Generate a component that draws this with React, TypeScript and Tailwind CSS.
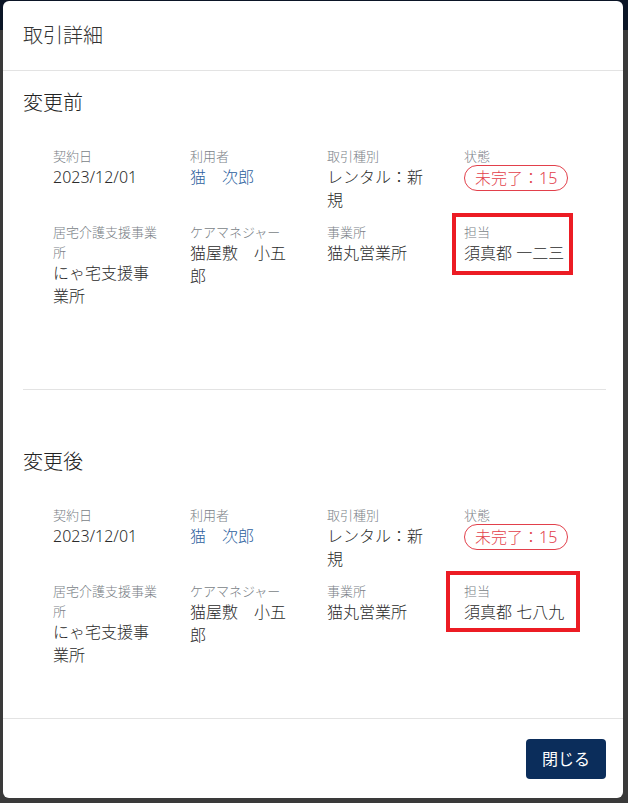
import React from "react";

type Field = {
  label: string;
  value: string;
  kind?: "link" | "badge";
  mark?: { left: number; top: number; width: number; height: number };
};

const FONT = { fontFamily: '"Noto Sans", "Noto Sans CJK JP", sans-serif' };

function Cell({ field }: { field: Field }) {
  return (
    <div className="relative pr-[28px]">
      {field.mark && (
        <div
          className="absolute border-[4px] border-[#ec1c24] pointer-events-none"
          style={{
            left: field.mark.left,
            top: field.mark.top,
            width: field.mark.width,
            height: field.mark.height,
          }}
        />
      )}
      <div className="text-[13px] leading-[20px] font-light text-[#7a7f87]">{field.label}</div>
      {field.kind === "badge" ? (
        <div className="mt-[-1px] inline-flex h-[26px] items-center rounded-full border border-[#e2404b] px-[10px] text-[16px] font-light text-[#e2404b]">
          {field.value}
        </div>
      ) : (
        <div
          className={
            "text-[16px] leading-[23px] font-light " +
            (field.kind === "link" ? "text-[#2d5f9e]" : "text-[#2b2b2b]")
          }
        >
          {field.value}
        </div>
      )}
    </div>
  );
}

function Section({ title, fields }: { title: string; fields: Field[] }) {
  return (
    <div>
      <h3 className="text-[20px] leading-[28px] font-light text-[#222222]">{title}</h3>
      <div className="mt-[29px] ml-[30px] grid grid-cols-[repeat(4,137px)] gap-y-[10px]">
        {fields.map((f) => (
          <Cell key={f.label} field={f} />
        ))}
      </div>
    </div>
  );
}

const base = (staff: string, mark: Field["mark"]): Field[] => [
  { label: "契約日", value: "2023/12/01" },
  { label: "利用者", value: "猫　次郎", kind: "link" },
  { label: "取引種別", value: "レンタル：新規" },
  { label: "状態", value: "未完了：15", kind: "badge" },
  { label: "居宅介護支援事業所", value: "にゃ宅支援事業所" },
  { label: "ケアマネジャー", value: "猫屋敷　小五郎" },
  { label: "事業所", value: "猫丸営業所" },
  { label: "担当", value: staff, mark },
];

export default function App() {
  return (
    <div className="relative h-[803px] w-[628px] overflow-hidden bg-[#3a3a3a]" style={FONT}>
      {/* dimmed page behind */}
      <div className="h-[30px] bg-[#0b1526]" />

      {/* dialog */}
      <div className="absolute left-[3px] top-[1px] flex h-[797px] w-[620px] flex-col rounded-[6px] bg-white">
        <div className="flex h-[70px] items-center border-b border-[#e3e3e3] px-[20px]">
          <h2 className="text-[20px] font-light text-[#333333]">取引詳細</h2>
        </div>

        <div className="flex-1 pl-[20px] pr-[17px] pt-[18px]">
          <Section title="変更前" fields={base("須真都 一二三", { left: -12, top: -9, width: 121, height: 62 })} />
          <div className="mt-[81px] border-t border-[#e3e3e3]" />
          <div className="pt-[58px]">
            <Section title="変更後" fields={base("須真都 七八九", { left: -18, top: -10, width: 134, height: 61 })} />
          </div>
        </div>

        <div className="flex justify-end border-t border-[#e3e3e3] px-[17px] pt-[20px] pb-[19px]">
          <button className="h-[40px] w-[80px] rounded-[4px] bg-[#0b2d5b] text-[16px] text-white">
            閉じる
          </button>
        </div>
      </div>
    </div>
  );
}
